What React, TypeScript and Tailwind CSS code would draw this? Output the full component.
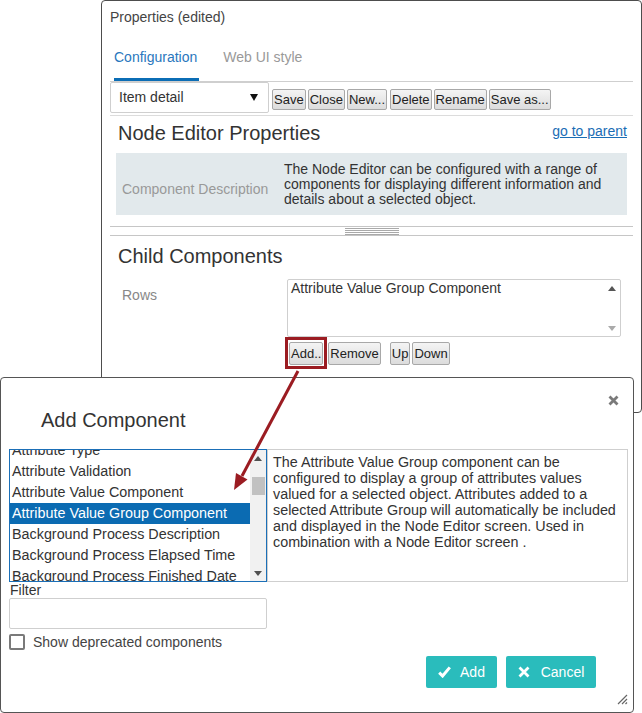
import type { ReactNode } from "react";

const DIALOG_ITEMS = [
  "Attribute Type",
  "Attribute Validation",
  "Attribute Value Component",
  "Attribute Value Group Component",
  "Background Process Description",
  "Background Process Elapsed Time",
  "Background Process Finished Date",
];

const SELECTED = "Attribute Value Group Component";

const Btn = ({ children, className = "" }: { children: ReactNode; className?: string }) => (
  <button
    className={
      "h-[21px] rounded-[2px] border border-[#a8a8a8] bg-linear-to-b from-[#f4f4f4] to-[#dcdcdc] px-[1px] text-[13px] leading-[17px] text-[#222] " +
      className
    }
  >
    {children}
  </button>
);

const Tri = ({ up, color }: { up?: boolean; color: string }) => (
  <svg width="8" height="5" viewBox="0 0 8 5">
    <path d={up ? "M0 5L4 0L8 5Z" : "M0 0L4 5L8 0Z"} fill={color} />
  </svg>
);

const PropertiesPanel = () => (
  <div className="absolute left-[101px] top-0 h-[413px] w-[541px] rounded-[4px] border border-[#4d4d4d] bg-white px-[8px] text-[#333]">
    <div className="pt-[8px] text-[14px] leading-[16px] text-[#444]">Properties (edited)</div>

    {/* tabs */}
    <div className="mt-[24px] flex border-b border-[#cfcfcf] pl-[4px] text-[14px] leading-[16px]">
      <div className="border-b-[3px] border-[#0b6db5] pb-[13px] pr-[2px] text-[#2a77bd]">Configuration</div>
      <div className="ml-[24px] pb-[16px] text-[#999]">Web UI style</div>
    </div>

    {/* toolbar */}
    <div className="flex items-end border-b border-[#dcdcdc] pb-[2px]">
      <div className="flex h-[31px] w-[159px] items-center justify-between rounded-[2px] border border-[#cfcfcf] pl-[8px] pr-[10px] text-[14px] text-[#333]">
        <span>Item detail</span>
        <svg width="8" height="7" viewBox="0 0 8 7">
          <path d="M0 0L8 0L4 7Z" fill="#111" />
        </svg>
      </div>
      <div className="mb-[3px] ml-[3px] flex gap-[2px]">
        <Btn>Save</Btn>
        <Btn>Close</Btn>
        <Btn>New...</Btn>
        <Btn className="ml-[1px]">Delete</Btn>
        <Btn>Rename</Btn>
        <Btn>Save as...</Btn>
      </div>
    </div>

    {/* node editor */}
    <div className="mt-[5px] flex items-center justify-between pl-[8px] pr-[6px]">
      <h2 className="text-[20px] leading-[24px] text-[#333]">Node Editor Properties</h2>
      <a className="-mt-[4px] text-[14px] leading-[16px] text-[#1a6db5] underline">go to parent</a>
    </div>
    <div className="mx-[6px] mt-[8px] flex items-center bg-[#e2e9ec] pb-[8px] pt-[9px] text-[14px] leading-[15px]">
      <div className="w-[168px] shrink-0 pl-[6px] pt-[10px] text-[#999]">Component Description</div>
      <div className="pr-[10px] text-[#333]">
        The Node Editor can be configured with a range of components for displaying different information and
        details about a selected object.
      </div>
    </div>

    {/* splitter */}
    <div className="mt-[11px] flex h-[10px] items-center justify-center border-y border-[#c6c6c6]">
      <div className="flex w-[54px] flex-col gap-[1px]">
        <div className="h-px bg-[#a9a9a9]" />
        <div className="h-px bg-[#a9a9a9]" />
        <div className="h-px bg-[#a9a9a9]" />
        <div className="h-px bg-[#a9a9a9]" />
      </div>
    </div>

    <h2 className="mt-[8px] pl-[8px] text-[20px] leading-[24px] text-[#333]">Child Components</h2>

    <div className="mt-[11px] flex">
      <div className="w-[177px] shrink-0 pl-[12px] pt-[8px] text-[14px] leading-[16px] text-[#888]">Rows</div>
      <div className="w-[334px]">
        <div className="flex h-[58px] rounded-[2px] border border-[#cfcfcf]">
          <div className="flex-1 pl-[3px] text-[14px] leading-[16px] text-[#333]">Attribute Value Group Component</div>
          <div className="flex w-[16px] flex-col items-center justify-between">
            <div className="flex h-[16px] items-center">
              <Tri up color="#555" />
            </div>
            <div className="flex h-[16px] items-center">
              <Tri color="#aaa" />
            </div>
          </div>
        </div>
        <div className="-ml-[2px] flex items-center">
          <span className="border-[3px] border-[#9b1c22] p-[1px]">
            <Btn className="h-[23px]">Add..</Btn>
          </span>
          <Btn className="ml-[1px] h-[23px]">Remove</Btn>
          <Btn className="ml-[9px] h-[23px]">Up</Btn>
          <Btn className="ml-[2px] h-[23px]">Down</Btn>
        </div>
      </div>
    </div>
  </div>
);

const AddDialog = () => (
  <div className="absolute left-0 top-[377px] z-10 h-[336px] w-[634px] rounded-[4px] border border-[#555] bg-white text-[#333]">
    <button className="absolute right-[14px] top-[17px]">
      <svg width="11" height="11" viewBox="0 0 11 11">
        <path d="M1.5 1.5L9.5 9.5M9.5 1.5L1.5 9.5" stroke="#7a7a7a" strokeWidth="2.8" />
      </svg>
    </button>
    <h2 className="ml-[40px] mt-[30px] text-[20px] leading-[24px] text-[#333]">Add Component</h2>

    <div className="ml-[8px] mt-[17px] flex h-[133px]">
      <div className="flex w-[258px] overflow-hidden border border-[#1b6fb7]">
        <div className="flex-1 overflow-hidden">
          <div className="-mt-[10px]">
            {DIALOG_ITEMS.map((item) => (
              <div
                key={item}
                className={
                  item === SELECTED
                    ? "h-[21px] whitespace-nowrap bg-[#0b6bb2] pl-[2px] text-[14.35px] leading-[21px] text-white"
                    : "h-[21px] whitespace-nowrap pl-[2px] text-[14.35px] leading-[21px] text-[#333]"
                }
              >
                {item}
              </div>
            ))}
          </div>
        </div>
        <div className="flex w-[16px] flex-col items-center bg-[#f1f1f1]">
          <div className="flex h-[16px] items-center">
            <Tri up color="#505050" />
          </div>
          <div className="mt-[11px] h-[18px] w-[13px] bg-[#c1c1c1]" />
          <div className="mt-auto flex h-[16px] items-center">
            <Tri color="#505050" />
          </div>
        </div>
      </div>
      <div className="w-[361px] border border-[#cfcfcf] pl-[5px] pr-[6px] pt-[4px] text-[14.35px] leading-[16px] text-[#333]">
        The Attribute Value Group component can be configured to display a group of attributes values valued for a
        selected object. Attributes added to a selected Attribute Group will automatically be included and displayed
        in the Node Editor screen. Used in combination with a Node Editor screen .
      </div>
    </div>

    <div className="ml-[9px] text-[14px] leading-[16px] text-[#333]">Filter</div>
    <div className="ml-[8px] h-[31px] w-[258px] rounded-[2px] border border-[#cfcfcf]" />

    <label className="ml-[8px] mt-[5px] flex h-[16px] items-center gap-[8px]">
      <span className="h-[16px] w-[16px] rounded-[2px] border-2 border-[#7a7a7a]" />
      <span className="text-[14px] leading-[16px] text-[#444]">Show deprecated components</span>
    </label>

    <div className="mr-[37px] mt-[6px] flex justify-end gap-[9px]">
      <button className="flex h-[32px] w-[71px] items-center justify-center gap-[9px] rounded-[2px] bg-[#2abcbc] text-[14px] text-white">
        <svg width="13" height="12" viewBox="0 0 13 12">
          <path d="M1.2 6.6L4.6 10L11.8 1.4" stroke="white" strokeWidth="3" fill="none" />
        </svg>
        Add
      </button>
      <button className="flex h-[32px] w-[90px] items-center justify-center gap-[11px] rounded-[2px] bg-[#2abcbc] text-[14px] text-white">
        <svg width="12" height="12" viewBox="0 0 12 12">
          <path d="M1.5 1.5L10.5 10.5M10.5 1.5L1.5 10.5" stroke="white" strokeWidth="2.8" />
        </svg>
        Cancel
      </button>
    </div>

    <svg className="absolute bottom-[7px] right-[5px]" width="12" height="12" viewBox="0 0 12 12">
      <path d="M11 2L2 11M11 6L6 11M11 9.5L9.5 11" stroke="#666" strokeWidth="1.2" />
    </svg>
  </div>
);

export default function App() {
  return (
    <div className="relative h-[713px] w-[642px] overflow-hidden bg-white font-['Liberation_Sans',Arial,sans-serif]">
      <PropertiesPanel />
      <AddDialog />
      {/* pointer from Add.. to the selected list item */}
      <svg className="pointer-events-none absolute left-0 top-0 z-20" width="642" height="713">
        <line x1="298" y1="371" x2="242" y2="476" stroke="#9b1c22" strokeWidth="3" />
        <polygon points="234,490 247.5,479.5 236,473" fill="#9b1c22" />
      </svg>
    </div>
  );
}
